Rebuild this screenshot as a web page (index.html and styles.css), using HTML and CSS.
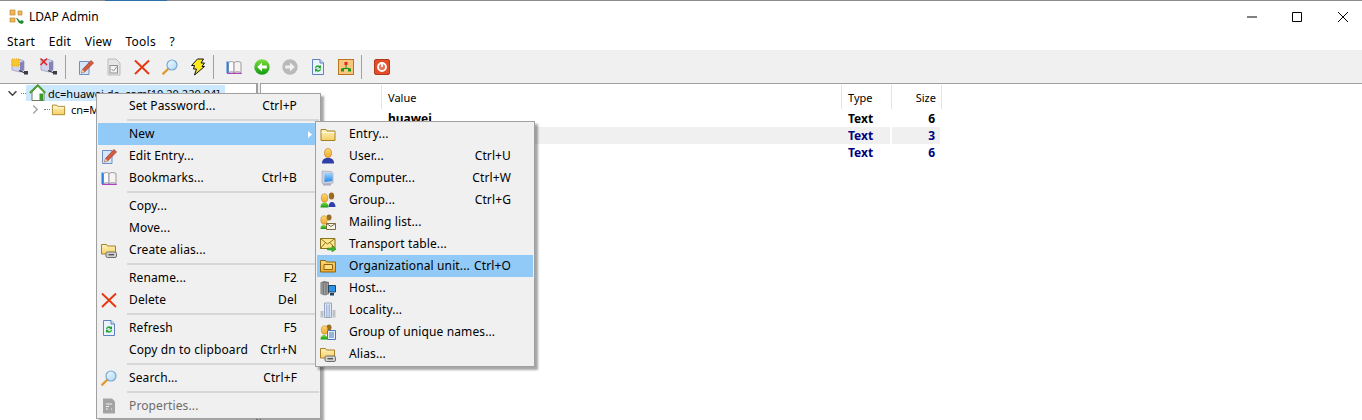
FILE: index.html
```html
<!DOCTYPE html>
<html lang="en">
<head>
<meta charset="utf-8">
<title>LDAP Admin</title>
<link rel="stylesheet" href="styles.css">
</head>
<body>
<svg class="defs" width="0" height="0" aria-hidden="true">
  <defs>
    <linearGradient id="fold" x1="0" y1="0" x2="0" y2="1"><stop offset="0" stop-color="#fff3c0"/><stop offset="1" stop-color="#f5cf62"/></linearGradient>
    <linearGradient id="org" x1="0" y1="0" x2="0" y2="1"><stop offset="0" stop-color="#ffd873"/><stop offset="1" stop-color="#f0a92d"/></linearGradient>
    <linearGradient id="monitor" x1="0" y1="0" x2="0" y2="1"><stop offset="0" stop-color="#9fd4ff"/><stop offset="1" stop-color="#2487e6"/></linearGradient>
    <linearGradient id="grn" x1="0" y1="0" x2="0" y2="1"><stop offset="0" stop-color="#7ddc3e"/><stop offset="1" stop-color="#129a12"/></linearGradient>
    <linearGradient id="lens" x1="0" y1="0" x2="1" y2="1"><stop offset="0" stop-color="#f2fbff"/><stop offset="1" stop-color="#a9d8f8"/></linearGradient>
    <symbol id="i-folder" viewBox="0 0 16 16"><path d="M1 3.500h5l1 1.500h8v9.500H1z" fill="url(#fold)" stroke="#a78125"/><path d="M1.500 6.500h13" stroke="#fffbe0"/></symbol>
    <symbol id="i-edit" viewBox="0 0 16 16"><path d="M1.500 2.500h9.500v13H1.500z" fill="#d5e6fb" stroke="#6f8fc5"/><path d="M3.500 14l1-3.500L13 1.500l2.500 2.500L6.500 13z" fill="#d9593d" stroke="#8c3a28" stroke-width=".7"/><path d="M3.500 14l1-3.500 2 2.500z" fill="#f5d7a0"/></symbol>
    <symbol id="i-book" viewBox="0 0 16 16"><path d="M2.500 3.500c2-1.300 4-1.300 5.500 0v10c-1.500-1-3.500-1-5.500 0z" fill="#fbfbfb" stroke="#9a9aa2"/><path d="M8 3.500c2-1.300 4.500-1.300 7 0v10c-2.500-1-5-1-7 0z" fill="#f7f3ee" stroke="#9a9aa2"/><path d="M.5 2.500h2V14h-2z" fill="#2d7fe0"/><path d="M1 13.800h14.800v1.200H1z" fill="#b341bf"/></symbol>
    <symbol id="i-x" viewBox="0 0 16 16"><path d="M1 1.500l14 13.500M15 1.500L1 15" stroke="#e5380f" stroke-width="1.900" fill="none"/></symbol>
    <symbol id="i-search" viewBox="0 0 16 16"><path d="M1.300 14.700L6.500 9.500" stroke="#e69a33" stroke-width="2.400" stroke-linecap="round"/><circle cx="10" cy="6" r="5" fill="url(#lens)" stroke="#7ba7cf" stroke-width="1.200"/></symbol>
    <symbol id="i-refresh" viewBox="0 0 16 16"><path d="M2.500.5H10l3.500 3.500v11.500h-11z" fill="#eaf3fd" stroke="#5f82bd"/><path d="M10 .5V4h3.500" fill="#cfe0f5" stroke="#5f82bd"/><path d="M5 9a3 3 0 0 1 5-2l1-1v3.200H8l1-1a2 2 0 0 0-3 1zM11 10a3 3 0 0 1-5 2l-1 1V9.800h3l-1 1a2 2 0 0 0 3-1z" fill="#1fa52a"/></symbol>
    <symbol id="i-props" viewBox="0 0 16 16"><path d="M2 .5h9l3 3v12H2z" fill="#a4a4a4"/><path d="M5 6h6M5 8.500h3M5 11h2M10 11h1" stroke="#f0f0f0" stroke-width="1.200"/></symbol>
    <symbol id="i-alias" viewBox="0 0 16 16"><path d="M.5 2.500h5l1 1.500h8v8H.5z" fill="url(#fold)" stroke="#a78125"/><rect x="5" y="10" width="10.500" height="5.500" rx="1.500" fill="#d2d2d2" stroke="#6d6d6d"/><path d="M7.500 12.700h5.500" stroke="#555" stroke-width="1.400"/></symbol>
    <symbol id="i-user" viewBox="0 0 16 16"><path d="M2 15.500c0-4 2-5.500 6-5.500s6 1.500 6 5.500z" fill="#2f3ea8"/><ellipse cx="8" cy="5" rx="3.500" ry="4.500" fill="url(#org)" stroke="#b87617" stroke-width=".6"/></symbol>
    <symbol id="i-computer" viewBox="0 0 16 16"><path d="M2 1l9 .5 2 1.500v10L4.500 14.500 2 13z" fill="#cfd0de" stroke="#9ea1ba" stroke-width=".6"/><path d="M4.500 3h8v8l-8 1z" fill="url(#monitor)"/><path d="M3 13.500h8v2H3z" fill="#a9abc0"/></symbol>
    <symbol id="i-group" viewBox="0 0 16 16"><path d="M8.500 15c0-3 1.500-5 3.500-5s3.500 2 3.500 5z" fill="#2f3ea8"/><ellipse cx="11.500" cy="4" rx="2.700" ry="3.500" fill="#9c6b23"/><path d="M.5 15.500c0-3.500 1.500-5 4-5s4 1.500 4 5z" fill="url(#grn)"/><ellipse cx="4.500" cy="6" rx="3.200" ry="4.200" fill="url(#org)" stroke="#b87617" stroke-width=".5"/></symbol>
    <symbol id="i-mail" viewBox="0 0 16 16"><path d="M.5 15c0-3 1-4 3-4s3 1 3 4z" fill="url(#grn)"/><ellipse cx="9" cy="3.500" rx="2.500" ry="3" fill="#9c6b23"/><ellipse cx="4" cy="6" rx="3.200" ry="4.200" fill="url(#org)" stroke="#b87617" stroke-width=".5"/><path d="M6.500 9.500h9v6h-9z" fill="#f4f4ea" stroke="#7c6a42"/><path d="M6.500 9.500l4.500 3 4.500-3" fill="none" stroke="#7c6a42"/></symbol>
    <symbol id="i-transport" viewBox="0 0 16 16"><path d="M.5 2.500h14.500v10H.5z" fill="#ffe88c" stroke="#8a7225"/><path d="M.5 2.500l7 5.500 7.500-5.500M.5 12.500l5-6M15 12.500l-5-6" fill="none" stroke="#8a7225"/><path d="M7.500 12h4.500v-2l4 3.200-4 2.800v-2H7.500z" fill="#3fb52e" stroke="#1d7d18" stroke-width=".5"/></symbol>
    <symbol id="i-ou" viewBox="0 0 16 16"><path d="M.5 2.500h5l1 1.500h9v10H.5z" fill="url(#org)" stroke="#8d6512"/><path d="M4 6.500h8.500v5H4z" fill="#ffdc80" stroke="#8d6512"/></symbol>
    <symbol id="i-host" viewBox="0 0 16 16"><path d="M.5 2.500L4 1l5 1v12l-4 1.500L.5 14z" fill="#777"/><path d="M2 3v11M4.800 3v12M7.200 3v11" stroke="#bdbdbd" stroke-width=".8"/><path d="M8.500 5.500h7v6.500h-7z" fill="#2d93e8" stroke="#24475f"/><path d="M10 13h4v2.500h-4z" fill="#24475f"/></symbol>
    <symbol id="i-locality" viewBox="0 0 16 16"><path d="M.5 15.500V9h3v6.500zM12.500 15.500V8h3v7.500z" fill="#bfc3c9"/><path d="M4.500 15.500V1h7v14.500z" fill="#dfe7f5" stroke="#9aa8bd"/><path d="M6.800 2.500V15M9.200 2.500V15" stroke="#88a5d8"/></symbol>
    <symbol id="i-unique" viewBox="0 0 16 16"><path d="M.5 15.500c0-3 1.500-4.500 3.500-4.500s3.500 1.500 3.500 4.500z" fill="url(#grn)"/><ellipse cx="9" cy="3.500" rx="2.500" ry="3" fill="#9c6b23"/><ellipse cx="4.500" cy="6" rx="3.200" ry="4.200" fill="url(#org)" stroke="#b87617" stroke-width=".5"/><path d="M7.500 6.500h8v9h-8z" fill="#e5effb" stroke="#4e76b5"/><path d="M9 9h5M9 11h5M9 13h5" stroke="#4e76b5"/></symbol>
    <symbol id="i-connect" viewBox="0 0 17 17"><path d="M1 1.500h8l4 1.500v9l-4 2-8-2z" fill="#d4d3ec" stroke="#9694bd" stroke-width=".7"/><path d="M9 4.500V14l4-2V3z" fill="#8583b8"/><rect x="1" y="1" width="7" height="7" fill="#f8c832" stroke="#e8a315" stroke-dasharray="1 1"/><path d="M8 12.500l6 2.500" stroke="#3c3c46" stroke-width="1.300"/><path d="M13 13h4v3.500h-4z" fill="#3c3c46"/></symbol>
    <symbol id="i-disconnect" viewBox="0 0 17 17"><path d="M1 1.500h8l4 1.500v9l-4 2-8-2z" fill="#d4d3ec" stroke="#9694bd" stroke-width=".7"/><path d="M9 4.500V14l4-2V3z" fill="#8583b8"/><path d="M.5.500l6.500 6.500M7 .5L.5 7" stroke="#e01f1f" stroke-width="1.500"/><path d="M8 12.500l6 2.500" stroke="#3c3c46" stroke-width="1.300"/><path d="M13 13h4v3.500h-4z" fill="#3c3c46"/></symbol>
    <symbol id="i-save" viewBox="0 0 16 18"><path d="M2 1h8l4 4v12H2z" fill="#e6e6e6" stroke="#bcbcbc"/><rect x="4" y="7.500" width="7.500" height="7.500" fill="#f3f3f3" stroke="#8f8f8f"/><path d="M5.500 11l2 2 3.500-4.500" fill="none" stroke="#8f8f8f"/></symbol>
    <symbol id="i-bolt" viewBox="0 0 16 18"><path d="M7.500 1h6l-2.500 4h3.500L12 8.500h2.500L4.500 17 6.500 11H3.500l1-3.500H1.500z" fill="#ffea1e" stroke="#111" stroke-width="1"/></symbol>
    <symbol id="i-back" viewBox="0 0 16 16"><circle cx="8" cy="8" r="7.700" fill="url(#grn)"/><path d="M3.200 8L8 3.500v3h4.800v3H8v3z" fill="#fff"/></symbol>
    <symbol id="i-forward" viewBox="0 0 16 16"><circle cx="8" cy="8" r="7.700" fill="#b9b9b9"/><path d="M12.800 8L8 3.500v3H3.200v3H8v3z" fill="#f1f1f1"/></symbol>
    <symbol id="i-tree" viewBox="0 0 16 16"><rect x=".5" y=".5" width="15" height="15" fill="#fac67d" stroke="#b9761f"/><rect x="6.500" y="3" width="3" height="3" fill="#db2727"/><path d="M8 6v3M4.500 9.500h7" stroke="#1a8a1a"/><rect x="3" y="9.500" width="3" height="3" fill="#1a9a1a"/><rect x="10" y="9.500" width="3" height="3" fill="#1a9a1a"/></symbol>
    <symbol id="i-power" viewBox="0 0 16 16"><rect x=".5" y=".5" width="15" height="15" rx="1.500" fill="#e34d2a" stroke="#b2391e"/><circle cx="8" cy="8" r="4" fill="#f7c8bb" fill-opacity=".35" stroke="#fff" stroke-width="1.800"/><path d="M8 3v5" stroke="#fff" stroke-width="1.800"/></symbol>
    <symbol id="i-home" viewBox="0 0 17 17"><path d="M3 8v8.500h12V8L9 2z" fill="#fff" stroke="#6f7a66"/><path d="M.8 9L8.800 1.200 16.300 9" fill="none" stroke="#4f9e33" stroke-width="2"/><path d="M10.500 9.500H14v7h-3.500z" fill="#3a9a28"/></symbol>
    <symbol id="i-app" viewBox="0 0 16 16"><rect x="1" y="1" width="5" height="5" fill="#f0b75a" stroke="#b97d20" stroke-width=".6"/><rect x="9" y="2" width="4" height="4" fill="#f0b75a" stroke="#b97d20" stroke-width=".6"/><rect x="1" y="9" width="5" height="4" fill="#f0b75a" stroke="#b97d20" stroke-width=".6"/><path d="M7 9c2 0 2 1 4 3l2-1 2 2-2 2-3-1z" fill="#1c8c34"/></symbol>
  </defs>
</svg>

<div class="window">
  <div class="topline"><span class="topline-active"></span></div>
  <header class="titlebar">
    <svg class="app-icon"><use href="#i-app"/></svg>
    <span class="title">LDAP Admin</span>
    <div class="caption">
      <svg class="cap-btn" viewBox="0 0 10 10"><path d="M0 5h10" stroke="#000"/></svg>
      <svg class="cap-btn" viewBox="0 0 10 10"><path d="M.5.500h9v9h-9z" fill="none" stroke="#000"/></svg>
      <svg class="cap-btn" viewBox="0 0 10 10"><path d="M0 0l10 10M10 0L0 10" stroke="#000"/></svg>
    </div>
  </header>
  <nav class="menubar">
    <span>Start</span><span>Edit</span><span>View</span><span>Tools</span><span>?</span>
  </nav>
  <div class="toolbar">
    <svg class="tb tb-wide"><use href="#i-connect"/></svg>
    <svg class="tb tb-wide"><use href="#i-disconnect"/></svg>
    <i class="tb-sep"></i>
    <svg class="tb"><use href="#i-edit"/></svg>
    <svg class="tb tb-tall"><use href="#i-save"/></svg>
    <svg class="tb"><use href="#i-x"/></svg>
    <svg class="tb"><use href="#i-search"/></svg>
    <svg class="tb tb-tall"><use href="#i-bolt"/></svg>
    <i class="tb-sep"></i>
    <svg class="tb"><use href="#i-book"/></svg>
    <svg class="tb"><use href="#i-back"/></svg>
    <svg class="tb"><use href="#i-forward"/></svg>
    <svg class="tb"><use href="#i-refresh"/></svg>
    <svg class="tb"><use href="#i-tree"/></svg>
    <i class="tb-sep"></i>
    <svg class="tb"><use href="#i-power"/></svg>
  </div>
  <main class="panes">
    <section class="tree">
      <div class="node">
        <svg class="chev" viewBox="0 0 8 8"><path d="M.5 2l3.500 3.500L7.500 2" fill="none" stroke="#404040" stroke-width="1.300"/></svg>
        <i class="dots"></i>
        <div class="sel">
          <svg class="node-icon"><use href="#i-home"/></svg>
          <span class="node-label">dc=huawei,dc=com [10.20.220.94]</span>
        </div>
      </div>
      <div class="node node-child">
        <svg class="chev" viewBox="0 0 8 8"><path d="M2 .5L5.500 4 2 7.500" fill="none" stroke="#a6a6a6" stroke-width="1.300"/></svg>
        <i class="dots dots-child"></i>
        <svg class="node-icon-sm"><use href="#i-folder"/></svg>
        <span class="node-label">cn=Manager</span>
      </div>
    </section>
    <section class="grid">
      <div class="row head">
        <span class="c-attr"></span>
        <span class="c-value">Value</span>
        <span class="c-type">Type</span>
        <span class="c-size">Size</span>
      </div>
      <div class="row data black">
        <span class="c-attr"></span>
        <span class="c-value">huawei</span>
        <span class="c-type">Text</span>
        <span class="c-size">6</span>
      </div>
      <div class="row data alt navy">
        <span class="c-attr"></span>
        <span class="c-value">com</span>
        <span class="c-type">Text</span>
        <span class="c-size">3</span>
      </div>
      <div class="row data navy">
        <span class="c-attr"></span>
        <span class="c-value">huawei</span>
        <span class="c-type">Text</span>
        <span class="c-size">6</span>
      </div>
    </section>
  </main>
</div>

<div class="menu menu-main">
  <div class="mi"><span class="mi-icon"></span><span class="mi-text">Set Password...</span><span class="mi-key">Ctrl+P</span></div>
  <div class="sep"></div>
  <div class="mi hot"><span class="mi-icon"></span><span class="mi-text">New</span><svg class="arrow" viewBox="0 0 4 7"><path d="M0 0l4 3.500L0 7z" fill="#fff"/></svg></div>
  <div class="mi"><svg class="mi-icon"><use href="#i-edit"/></svg><span class="mi-text">Edit Entry...</span></div>
  <div class="mi"><svg class="mi-icon"><use href="#i-book"/></svg><span class="mi-text">Bookmarks...</span><span class="mi-key">Ctrl+B</span></div>
  <div class="sep"></div>
  <div class="mi"><span class="mi-icon"></span><span class="mi-text">Copy...</span></div>
  <div class="mi"><span class="mi-icon"></span><span class="mi-text">Move...</span></div>
  <div class="mi"><svg class="mi-icon"><use href="#i-alias"/></svg><span class="mi-text">Create alias...</span></div>
  <div class="sep"></div>
  <div class="mi"><span class="mi-icon"></span><span class="mi-text">Rename...</span><span class="mi-key">F2</span></div>
  <div class="mi"><svg class="mi-icon"><use href="#i-x"/></svg><span class="mi-text">Delete</span><span class="mi-key">Del</span></div>
  <div class="sep"></div>
  <div class="mi"><svg class="mi-icon"><use href="#i-refresh"/></svg><span class="mi-text">Refresh</span><span class="mi-key">F5</span></div>
  <div class="mi"><span class="mi-icon"></span><span class="mi-text">Copy dn to clipboard</span><span class="mi-key">Ctrl+N</span></div>
  <div class="sep"></div>
  <div class="mi"><svg class="mi-icon"><use href="#i-search"/></svg><span class="mi-text">Search...</span><span class="mi-key">Ctrl+F</span></div>
  <div class="sep"></div>
  <div class="mi off"><svg class="mi-icon"><use href="#i-props"/></svg><span class="mi-text">Properties...</span></div>
</div>

<div class="menu menu-sub">
  <div class="mi"><svg class="mi-icon"><use href="#i-folder"/></svg><span class="mi-text">Entry...</span></div>
  <div class="mi"><svg class="mi-icon"><use href="#i-user"/></svg><span class="mi-text">User...</span><span class="mi-key">Ctrl+U</span></div>
  <div class="mi"><svg class="mi-icon"><use href="#i-computer"/></svg><span class="mi-text">Computer...</span><span class="mi-key">Ctrl+W</span></div>
  <div class="mi"><svg class="mi-icon"><use href="#i-group"/></svg><span class="mi-text">Group...</span><span class="mi-key">Ctrl+G</span></div>
  <div class="mi"><svg class="mi-icon"><use href="#i-mail"/></svg><span class="mi-text">Mailing list...</span></div>
  <div class="mi"><svg class="mi-icon"><use href="#i-transport"/></svg><span class="mi-text">Transport table...</span></div>
  <div class="mi hot"><svg class="mi-icon"><use href="#i-ou"/></svg><span class="mi-text">Organizational unit...</span><span class="mi-key">Ctrl+O</span></div>
  <div class="mi"><svg class="mi-icon"><use href="#i-host"/></svg><span class="mi-text">Host...</span></div>
  <div class="mi"><svg class="mi-icon"><use href="#i-locality"/></svg><span class="mi-text">Locality...</span></div>
  <div class="mi"><svg class="mi-icon"><use href="#i-unique"/></svg><span class="mi-text">Group of unique names...</span></div>
  <div class="mi"><svg class="mi-icon"><use href="#i-alias"/></svg><span class="mi-text">Alias...</span></div>
</div>
</body>
</html>
```
FILE: styles.css
```css
* { box-sizing: border-box; }
html, body { margin: 0; padding: 0; height: 100%; overflow: hidden; background: #fff; }
body { font: 12px "Noto Sans", "Open Sans", sans-serif; color: #000; position: relative; }
.defs { position: absolute; }
i { display: block; font-style: normal; }

.window { display: flex; flex-direction: column; height: 420px; }
.topline { height: 1px; background: #8c8c8c; display: flex; padding-left: 105px; flex: none; }
.topline-active { width: 62px; background: #2e6fb0; }

.titlebar { display: flex; align-items: center; height: 31px; padding-left: 9px; flex: none; }
.app-icon { width: 16px; height: 16px; margin-right: 4px; }
.caption { margin-left: auto; display: flex; }
.cap-btn { width: 10px; height: 10px; margin-right: 35px; }
.cap-btn:nth-child(2) { margin-right: 36px; }
.cap-btn:last-child { margin-right: 14px; }

.menubar { display: flex; height: 18px; align-items: center; padding-left: 7px; gap: 13.5px; flex: none; letter-spacing: .25px; }

.toolbar { display: flex; align-items: center; height: 33px; background: #f0f0f0; flex: none; }
.tb { width: 16px; height: 16px; margin-left: 12px; flex: none; }
.tb-tall { height: 18px; }
.tb-wide { width: 17px; height: 17px; margin-left: 11px; margin-right: 1px; }
.tb-sep { width: 1px; height: 24px; background: #a0a0a0; margin-left: 7px; flex: none; }

.panes { display: flex; flex: 1; background: #f0f0f0; gap: 2px; min-height: 0; }
.tree { width: 258px; background: #fff; border-top: 1px solid #a0a0a0; border-right: 2px solid #a0a0a0; padding: 1px 0 0 8px; flex: none; }
.node { display: flex; align-items: center; height: 16px; }
.node-child { padding-left: 23px; }
.chev { width: 9px; height: 9px; flex: none; }
.dots { width: 5px; height: 1px; margin-left: 4px; flex: none; border-top: 1px dotted #808080; }
.dots-child { width: 6px; }
.sel { display: flex; align-items: center; height: 16px; background: #cce8ff; padding: 0 5px 0 3px; white-space: nowrap; }
.node-icon { width: 17px; height: 17px; flex: none; margin: -1px 2px 0 0; }
.node-icon-sm { width: 15px; height: 14px; flex: none; margin: 0 5px 0 1px; }
.node-label { white-space: nowrap; font-size: 11px; word-spacing: -3px; }

.grid { flex: 1; background: #fff; border: 1px solid #a0a0a0; border-width: 1px 0 0 1px; }
.row { display: flex; height: 17px; align-items: center; font-weight: 700; font-size: 12px; }
.head { height: 25px; font-weight: 400; font-size: 11px; padding-top: 1px; margin-bottom: 1px; }
.row span { padding: 0 6px; flex: none; height: 100%; display: flex; align-items: center; }
.c-attr { width: 121px; }
.c-value { width: 460px; }
.c-type { width: 50px; }
.c-size { width: 50px; justify-content: flex-end; }
.row .c-size { padding-right: 7px; }
.head .c-size { padding-right: 5px; }
.head span { border-right: 1px solid #e4e4e4; }
.black { color: #000; }
.navy { color: #000080; }
.alt span { background: #f0f0f0; }
.alt .c-type { width: 48px; margin-right: 2px; }
.alt .c-size { width: 48px; padding-right: 5px; }

.menu { position: absolute; background: #f0f0f0; border: 1px solid #a0a0a0; padding: 1px; box-shadow: 3px 3px 2px rgba(0,0,0,.35); z-index: 2; }
.menu-main { left: 96px; top: 93px; width: 225px; }
.menu-sub { left: 315px; top: 121px; width: 220px; z-index: 3; }
.mi { display: flex; align-items: center; height: 22px; padding-right: 22px; white-space: nowrap; letter-spacing: .12px; }
.mi-icon { width: 16px; height: 16px; margin: 0 9px 0 3px; flex: none; display: block; }
.mi-text { margin: 0 0 2px 3px; }
.menu-sub .mi-text { margin-left: 4px; }
.mi-key { margin: 0 0 2px auto; }
.hot { background: #91c9f7; }
.off { color: #6d6d6d; }
.arrow { width: 4px; height: 7px; margin-left: auto; margin-right: -15px; }
.sep { height: 6px; margin-left: 29px; padding-top: 2px; }
.sep::after { content: ""; display: block; height: 2px; background: #d7d7d7; }
```
